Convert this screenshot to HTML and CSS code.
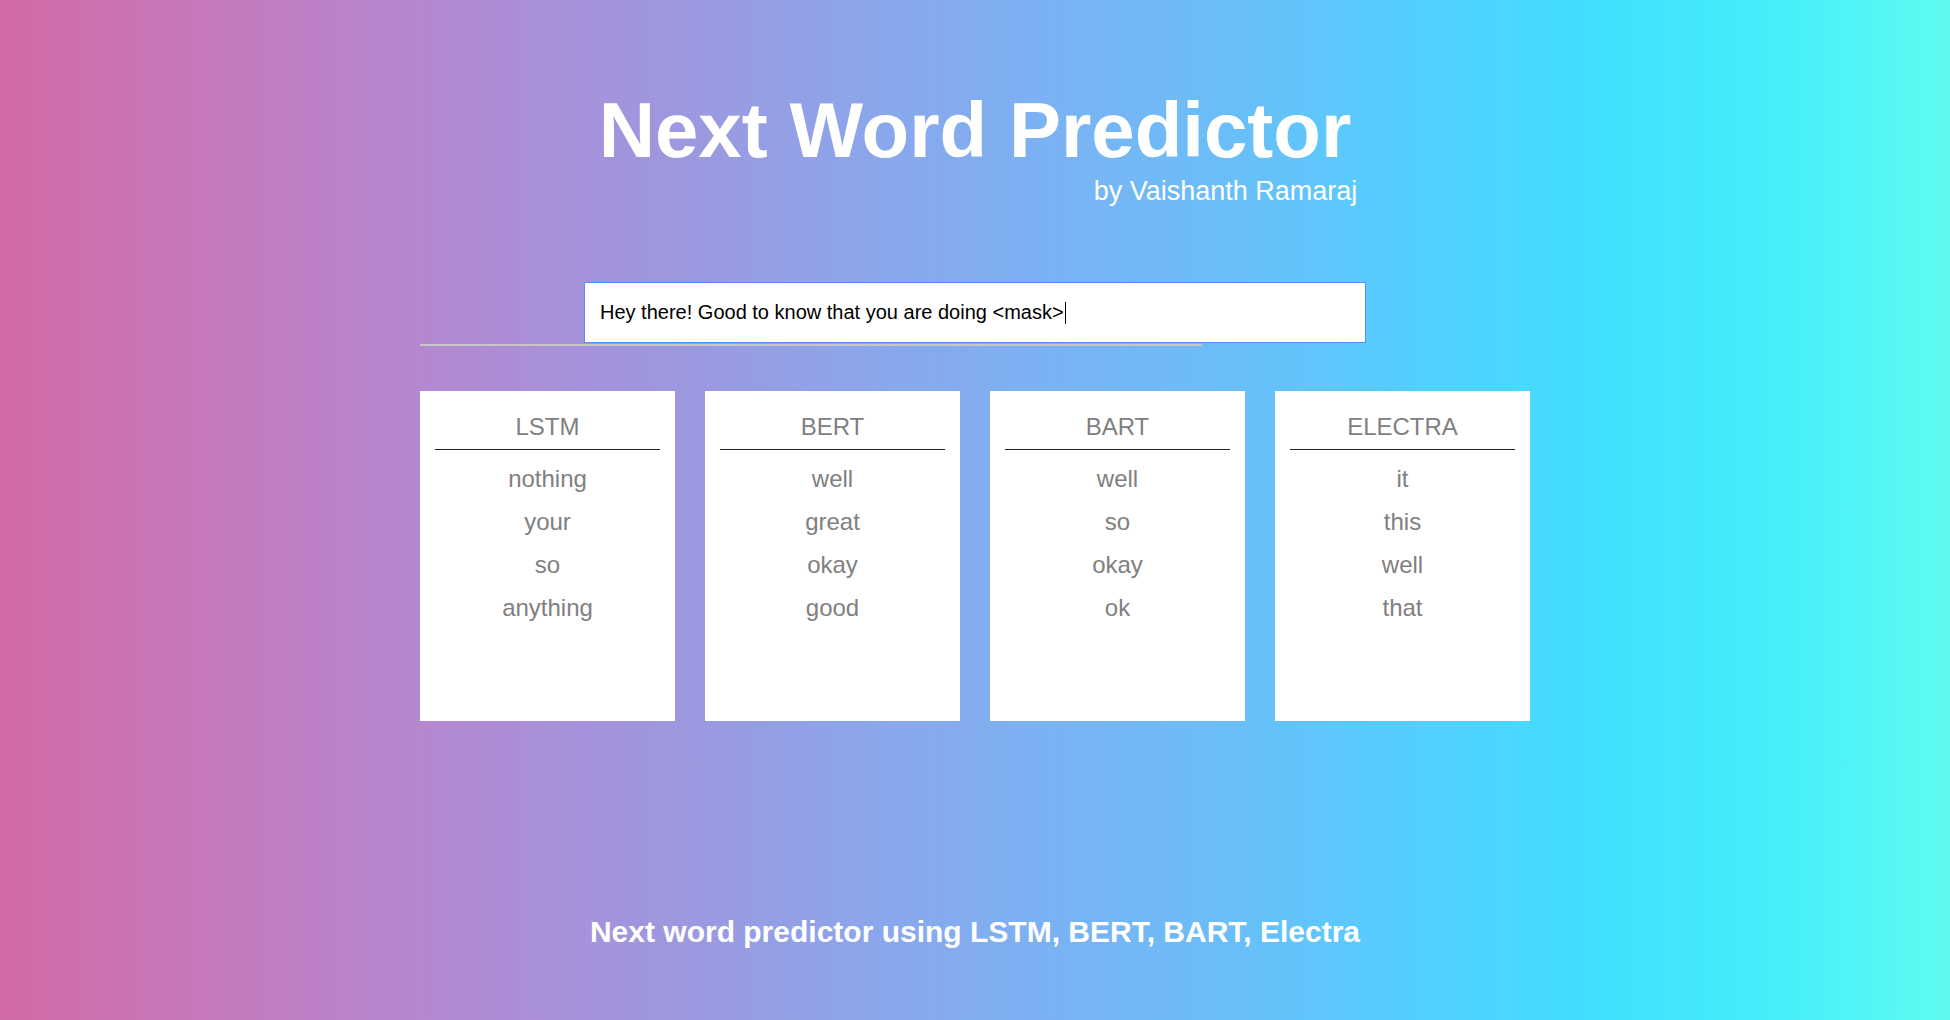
FILE: index.html
```html
<!DOCTYPE html>
<html lang="en">
<head>
<meta charset="utf-8">
<title>Next Word Predictor</title>
<link rel="stylesheet" href="styles.css">
</head>
<body>
<main class="page">
  <header class="head">
    <h1 class="title">Next Word Predictor</h1>
    <p class="byline">by Vaishanth Ramaraj</p>
  </header>

  <section class="wrap">
    <div class="field">
      <div class="input">Hey there! Good to know that you are doing &lt;mask&gt;<span class="caret"></span></div>
    </div>
    <div class="rule"></div>

    <div class="cards">
      <div class="card">
        <div class="card-head">LSTM</div>
        <ul class="words">
          <li>nothing</li>
          <li>your</li>
          <li>so</li>
          <li>anything</li>
        </ul>
      </div>
      <div class="card">
        <div class="card-head">BERT</div>
        <ul class="words">
          <li>well</li>
          <li>great</li>
          <li>okay</li>
          <li>good</li>
        </ul>
      </div>
      <div class="card">
        <div class="card-head">BART</div>
        <ul class="words">
          <li>well</li>
          <li>so</li>
          <li>okay</li>
          <li>ok</li>
        </ul>
      </div>
      <div class="card">
        <div class="card-head">ELECTRA</div>
        <ul class="words">
          <li>it</li>
          <li>this</li>
          <li>well</li>
          <li>that</li>
        </ul>
      </div>
    </div>
  </section>

  <footer class="foot">Next word predictor using LSTM, BERT, BART, Electra</footer>
</main>
</body>
</html>
```

FILE: styles.css
```css
* {
  box-sizing: border-box;
}

html, body {
  margin: 0;
  padding: 0;
}

body {
  min-height: 100vh;
  font-family: "Liberation Sans", Arial, sans-serif;
  background: linear-gradient(to right, #d16ba5, #c777b9, #ba83ca, #aa8fd8, #9a9ae1, #8aa7ec, #79b3f4, #69bff8, #52cffe, #41dfff, #46eefa, #5ffbf1);
}

.page {
  display: flex;
  flex-direction: column;
  align-items: center;
  padding-top: 86px;
}

.head {
  display: flex;
  flex-direction: column;
  color: #fff;
}

.title {
  margin: 0;
  font-size: 78px;
  line-height: 88px;
  font-weight: 700;
  text-align: center;
}

.byline {
  margin: 2px -6px 0 0;
  font-size: 27px;
  line-height: 30px;
  text-align: right;
}

.wrap {
  width: 1110px;
  margin-top: 76px;
}

.field {
  display: flex;
  justify-content: center;
}

.input {
  width: 782px;
  height: 61px;
  display: flex;
  align-items: center;
  padding: 0 15px;
  background: #fff;
  border: 1px solid #4d90fe;
  color: #000;
  font-size: 20px;
}

.caret {
  display: inline-block;
  width: 1px;
  height: 22px;
  margin-left: 1px;
  background: #000;
}

.rule {
  width: 782px;
  height: 2px;
  margin-top: 1px;
  background: #c6c6c6;
}

.cards {
  display: grid;
  grid-template-columns: repeat(4, 255px);
  gap: 30px;
  margin-top: 45px;
}

.card {
  height: 330px;
  background: #fff;
  padding: 22px 15px 0;
  color: #808080;
  font-size: 24px;
  text-align: center;
}

.card-head {
  line-height: 28px;
  padding-bottom: 8px;
  border-bottom: 1px solid #222;
}

.words {
  list-style: none;
  margin: 0;
  padding: 6.5px 0 0;
  line-height: 43px;
}

.foot {
  margin-top: 194px;
  color: #fff;
  font-weight: 700;
  font-size: 30px;
  line-height: 34px;
  text-align: center;
}
```
